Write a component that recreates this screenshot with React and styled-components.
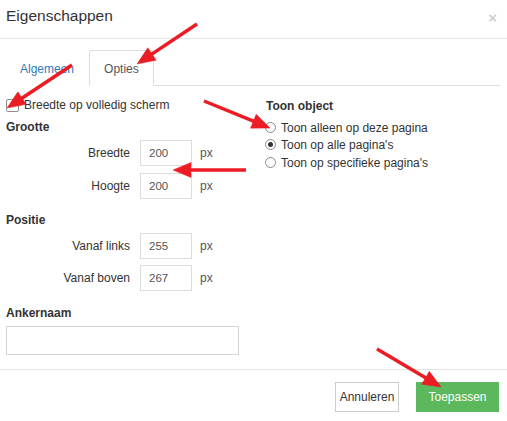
import React from 'react'
import styled, { createGlobalStyle } from 'styled-components'

const GlobalStyle = createGlobalStyle`
  html, body {
    margin: 0;
    padding: 0;
    background: #fff;
  }
  body {
    font-family: 'Liberation Sans', Arial, sans-serif;
    font-size: 12px;
    color: #333;
  }
`

const Modal = styled.div`
  position: relative;
  width: 507px;
  height: 421px;
  background: #fff;
  overflow: hidden;
`

const Header = styled.div`
  height: 39px;
  box-sizing: border-box;
  border-bottom: 1px solid #e5e5e5;
  display: flex;
  align-items: center;
  justify-content: space-between;
  padding: 0 10px 6px 6px;
`

const Title = styled.h4`
  margin: 0;
  font-size: 15.5px;
  font-weight: normal;
  color: #333;
`

const Close = styled.span`
  font-size: 15px;
  font-weight: bold;
  color: #cfcfcf;
  line-height: 1;
  margin-top: 2px;
`

const Body = styled.div`
  padding: 11px 6px 0 6px;
`

const Tabs = styled.div`
  display: flex;
  height: 36px;
  margin: 0 1px 0 -1px;
  border-bottom: 1px solid #ddd;
  box-sizing: border-box;
`

const Tab = styled.div`
  padding: 0 14px;
  display: flex;
  align-items: center;
  padding-top: 2px;
  margin-bottom: -1px;
  border: 1px solid ${(p) => (p.$active ? '#ddd' : 'transparent')};
  border-bottom-color: ${(p) => (p.$active ? '#fff' : 'transparent')};
  background: #fff;
  color: ${(p) => (p.$active ? '#555' : '#337ab7')};
  border-radius: 3px 3px 0 0;
`

const Content = styled.div`
  display: flex;
  padding-top: 11px;
  height: 283px;
  box-sizing: border-box;
`

const LeftCol = styled.div`
  width: 260px;
  display: flex;
  flex-direction: column;
`

const RightCol = styled.div`
  display: flex;
  flex-direction: column;
  padding-top: 1px;
`

const CheckRow = styled.label`
  display: flex;
  align-items: center;
  height: 16px;
  gap: 5px;
`

const Check = styled.span`
  width: 11px;
  height: 11px;
  border: 1px solid #8f8f8f;
  border-radius: 2px;
  background: #fff;
`

const Heading = styled.div`
  font-weight: bold;
  height: 16px;
  line-height: 16px;
  margin-top: ${(p) => p.$top || 0}px;
`

const FieldRow = styled.div`
  display: flex;
  align-items: center;
  margin-top: ${(p) => p.$top || 0}px;
`

const Label = styled.span`
  width: 124px;
  text-align: right;
  color: #333;
`

const SmallInput = styled.div`
  margin-left: 10px;
  width: 52px;
  height: 26px;
  box-sizing: border-box;
  border: 1px solid #dcdcdc;
  padding-left: 8px;
  font-size: 11.5px;
  color: #555;
  display: flex;
  align-items: center;
`

const Unit = styled.span`
  margin-left: 8px;
  color: #555;
`

const WideInput = styled.div`
  margin-top: 5px;
  width: 233px;
  height: 29px;
  box-sizing: border-box;
  border: 1px solid #d4d4d4;
`

const RadioRow = styled.label`
  display: flex;
  align-items: center;
  gap: 5px;
  height: 17px;
  margin-left: -1px;
  margin-top: ${(p) => p.$top || 0}px;
`

const Radio = styled.span`
  width: 11px;
  height: 11px;
  box-sizing: border-box;
  border: 1px solid #8a8a8a;
  border-radius: 50%;
  display: flex;
  align-items: center;
  justify-content: center;
  &::after {
    content: '';
    width: 5px;
    height: 5px;
    border-radius: 50%;
    background: ${(p) => (p.$checked ? '#333' : 'transparent')};
  }
`

const Footer = styled.div`
  border-top: 1px solid #e5e5e5;
  display: flex;
  justify-content: flex-end;
  gap: 17px;
  padding: 12px 8px 0 0;
`

const Button = styled.button`
  font-family: inherit;
  font-size: 12px;
  height: 30px;
  padding: 0;
  border-radius: 0;
  border: 1px solid ${(p) => (p.$primary ? '#5cb85c' : '#ccc')};
  background: ${(p) => (p.$primary ? '#5cb85c' : '#fff')};
  color: ${(p) => (p.$primary ? '#fff' : '#333')};
  width: ${(p) => p.$w}px;
`

const Overlay = styled.svg`
  position: absolute;
  left: 0;
  top: 0;
  pointer-events: none;
`

const arrows = [
  [197, 24, 137, 64],
  [72, 65, 7, 108],
  [204, 101, 270, 128],
  [246, 170, 173, 170],
  [377, 349, 441, 387],
]

const Arrow = ({ x1, y1, x2, y2 }) => {
  const len = Math.hypot(x2 - x1, y2 - y1)
  const ux = (x2 - x1) / len
  const uy = (y2 - y1) / len
  const head = 18
  const half = 7.5
  const bx = x2 - ux * head
  const by = y2 - uy * head
  const pts = [
    [x2, y2],
    [bx - uy * half, by + ux * half],
    [bx + uy * half, by - ux * half],
  ]
  return (
    <g fill="#ec1c24" stroke="#ec1c24">
      <line x1={x1} y1={y1} x2={bx + ux * 2} y2={by + uy * 2} strokeWidth="3.5" />
      <polygon points={pts.map((p) => p.join(',')).join(' ')} strokeWidth="0.5" />
    </g>
  )
}

const App = () => {
  return (
    <Modal>
      <GlobalStyle />
      <Header>
        <Title>Eigenschappen</Title>
        <Close>×</Close>
      </Header>
      <Body>
        <Tabs>
          <Tab>Algemeen</Tab>
          <Tab $active>Opties</Tab>
        </Tabs>
        <Content>
          <LeftCol>
            <CheckRow>
              <Check />
              Breedte op volledig scherm
            </CheckRow>
            <Heading $top={6}>Grootte</Heading>
            <FieldRow $top={5}>
              <Label>Breedte</Label>
              <SmallInput>200</SmallInput>
              <Unit>px</Unit>
            </FieldRow>
            <FieldRow $top={7}>
              <Label>Hoogte</Label>
              <SmallInput>200</SmallInput>
              <Unit>px</Unit>
            </FieldRow>
            <Heading $top={13}>Positie</Heading>
            <FieldRow $top={5}>
              <Label>Vanaf links</Label>
              <SmallInput>255</SmallInput>
              <Unit>px</Unit>
            </FieldRow>
            <FieldRow $top={6}>
              <Label>Vanaf boven</Label>
              <SmallInput>267</SmallInput>
              <Unit>px</Unit>
            </FieldRow>
            <Heading $top={14}>Ankernaam</Heading>
            <WideInput />
          </LeftCol>
          <RightCol>
            <Heading>Toon object</Heading>
            <RadioRow $top={5}>
              <Radio />
              Toon alleen op deze pagina
            </RadioRow>
            <RadioRow $top={0}>
              <Radio $checked />
              Toon op alle pagina's
            </RadioRow>
            <RadioRow $top={1}>
              <Radio />
              Toon op specifieke pagina's
            </RadioRow>
          </RightCol>
        </Content>
      </Body>
      <Footer>
        <Button $w={64}>Annuleren</Button>
        <Button $primary $w={83}>Toepassen</Button>
      </Footer>
      <Overlay width="507" height="421">
        {arrows.map(([x1, y1, x2, y2], i) => (
          <Arrow key={i} x1={x1} y1={y1} x2={x2} y2={y2} />
        ))}
      </Overlay>
    </Modal>
  )
}

export default App
